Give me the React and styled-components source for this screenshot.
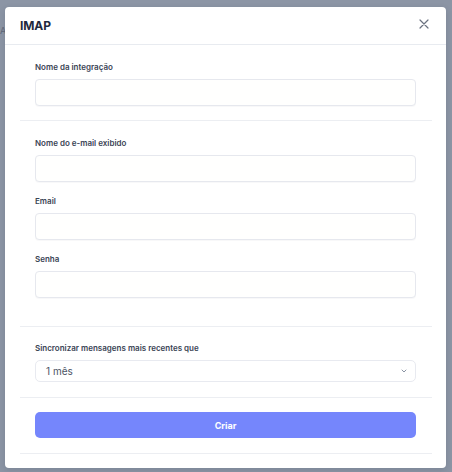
import React from 'react';
import styled, { createGlobalStyle } from 'styled-components';

const GlobalStyle = createGlobalStyle`
  html, body {
    margin: 0;
    padding: 0;
    background: #8c95a5;
  }
  body {
    font-family: Inter, "Noto Sans", sans-serif;
  }
  * {
    box-sizing: border-box;
  }
`;

const sections = [
  { fields: ['Nome da integração'], top: 16, bottom: 14 },
  { fields: ['Nome do e-mail exibido', 'Email', 'Senha'], top: 16, bottom: 28 },
];

const App = () => {
  return (
    <Page>
      <GlobalStyle />
      <BehindText>A</BehindText>
      <Modal>
        <Header>
          <Title>IMAP</Title>
          <CloseButton aria-label="Fechar">
            <svg width="10" height="10" viewBox="0 0 10 10">
              <path d="M1 1L9 9M9 1L1 9" stroke="#6b7280" strokeWidth="1.2" strokeLinecap="round" />
            </svg>
          </CloseButton>
        </Header>
        <Body>
          {sections.map((section, i) => (
            <Section key={i} $top={section.top} $bottom={section.bottom}>
              {section.fields.map((label) => (
                <Field key={label}>
                  <Label>{label}</Label>
                  <Input type={label === 'Senha' ? 'password' : 'text'} />
                </Field>
              ))}
            </Section>
          ))}
          <Section $top={15} $bottom={15}>
            <Field>
              <Label>Sincronizar mensagens mais recentes que</Label>
              <SelectBox>
                <span>1 mês</span>
                <svg width="6" height="4" viewBox="0 0 6 4">
                  <path d="M1 1L3 3L5 1" fill="none" stroke="#8a93a3" strokeWidth="1" strokeLinecap="round" strokeLinejoin="round" />
                </svg>
              </SelectBox>
            </Field>
          </Section>
          <Section $top={14} $bottom={15}>
            <SubmitButton>Criar</SubmitButton>
          </Section>
        </Body>
      </Modal>
    </Page>
  );
};

export default App;

const Page = styled.div`
  position: relative;
  width: 452px;
  height: 472px;
  padding: 7px 6px 4px 5px;
  background: #8c95a5;
  overflow: hidden;
`;

const BehindText = styled.span`
  position: absolute;
  left: 0;
  top: 25px;
  font-size: 9px;
  color: #5f6877;
`;

const Modal = styled.div`
  position: relative;
  width: 441px;
  height: 461px;
  background: #ffffff;
  border-radius: 4px;
  box-shadow: 0 2px 6px rgba(30, 40, 60, 0.15);
  display: flex;
  flex-direction: column;
`;

const Header = styled.div`
  height: 38px;
  display: flex;
  align-items: center;
  justify-content: space-between;
  padding: 0 17px 1px 15px;
  border-bottom: 1px solid #e8ebf0;
`;

const Title = styled.h2`
  margin: 0;
  font-size: 12px;
  font-weight: 700;
  color: #1f2a3d;
  letter-spacing: -0.1px;
`;

const CloseButton = styled.button`
  border: none;
  background: none;
  padding: 0;
  display: flex;
  cursor: pointer;
  margin-top: -3px;
`;

const Body = styled.div`
  padding: 0 14px 0 15px;
`;

const Section = styled.div`
  padding: ${(p) => p.$top}px 16px ${(p) => p.$bottom}px 15px;
  border-bottom: 1px solid #eceef2;
  display: flex;
  flex-direction: column;
  gap: 13px;
`;

const Field = styled.div`
  display: flex;
  flex-direction: column;
  gap: 6px;
`;

const Label = styled.label`
  font-size: 8px;
  line-height: 12px;
  font-weight: 600;
  color: #3a4455;
`;

const Input = styled.input`
  height: 27px;
  width: 100%;
  border: 1px solid #e6e8ee;
  border-radius: 4px;
  background: #fffffe;
  box-shadow: 0 1px 1px rgba(20, 30, 50, 0.03);
  outline: none;
  font-family: inherit;
  padding: 0 10px;
`;

const SelectBox = styled.div`
  height: 22px;
  display: flex;
  align-items: center;
  justify-content: space-between;
  padding: 0 8px 0 10px;
  border: 1px solid #e8eaf0;
  border-radius: 5px;
  background: #ffffff;
  font-size: 10px;
  color: #4b5363;
`;

const SubmitButton = styled.button`
  height: 26px;
  width: 100%;
  border: none;
  border-radius: 5px;
  background: #7586fc;
  color: #ffffff;
  font-family: inherit;
  font-size: 9px;
  font-weight: 700;
  cursor: pointer;
`;
